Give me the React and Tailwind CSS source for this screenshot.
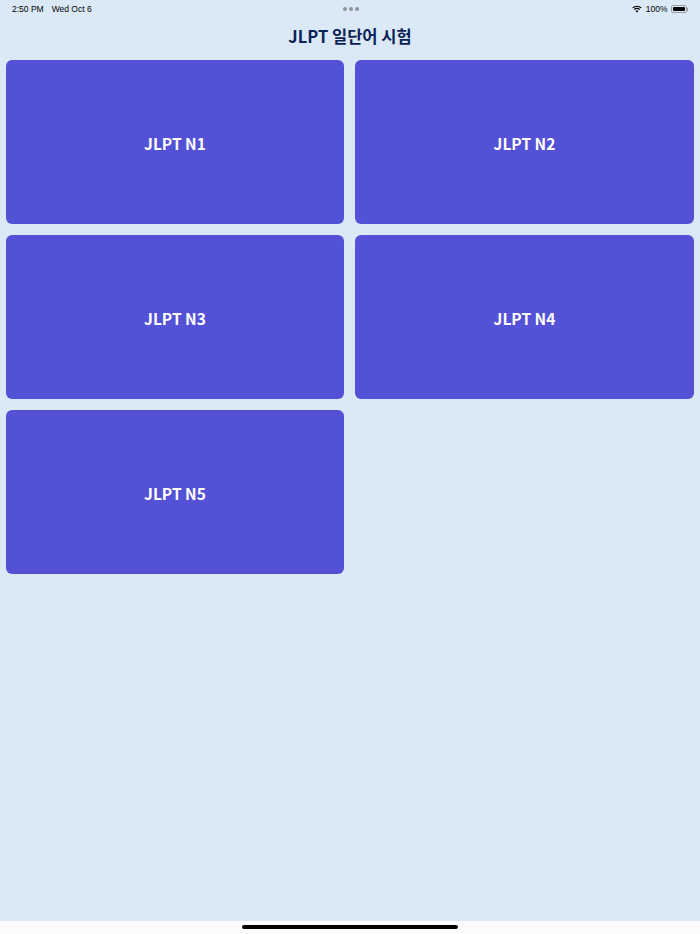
const levels = ["JLPT N1", "JLPT N2", "JLPT N3", "JLPT N4", "JLPT N5"];

function StatusBar() {
  return (
    <div className="h-[18px] shrink-0 flex items-center justify-between pl-[12px] pr-[12px] text-[8.5px] leading-none text-black font-['Liberation_Sans',sans-serif]">
      <div className="flex gap-[8px]">
        <span>2:50 PM</span>
        <span>Wed Oct 6</span>
      </div>
      <div className="flex items-center gap-[3px]">
        <svg className="mr-[1px]" width="10" height="8" viewBox="0 0 22 16" fill="none" stroke="#000" strokeWidth="2.6">
          <path d="M1.5 5.5C7 .8 15 .8 20.5 5.5" />
          <path d="M5 9.2c3.4-2.8 8.6-2.8 12 0" />
          <path d="M11 15.5 7.8 12.3c1.9-1.3 4.5-1.3 6.4 0Z" fill="#000" stroke="none" />
        </svg>
        <span>100%</span>
        <div className="flex items-center">
          <div className="w-[16px] h-[8px] rounded-[2px] border border-[#9a9fa5] p-[1px]">
            <div className="w-full h-full bg-black rounded-[1px]"></div>
          </div>
          <div className="w-[1px] h-[3px] bg-[#9a9fa5] ml-[0.5px]"></div>
        </div>
      </div>
    </div>
  );
}

export default function App() {
  return (
    <div className="relative w-[700px] h-[934px] flex flex-col bg-[#dbe9f6] font-['Noto_Sans_CJK_KR','Noto_Sans',sans-serif]">
      <StatusBar />
      <div className="absolute top-[7px] left-[343px] flex gap-[2px]">
        <div className="w-[4px] h-[4px] rounded-full bg-[#8d949b]"></div>
        <div className="w-[4px] h-[4px] rounded-full bg-[#8d949b]"></div>
        <div className="w-[4px] h-[4px] rounded-full bg-[#8d949b]"></div>
      </div>
      <div className="h-[42px] shrink-0 pb-[6px] flex items-center justify-center text-[16.5px] font-bold text-[#0b2257]">
        JLPT 일단어 시험
      </div>
      <div className="flex-1 px-[6px] grid grid-cols-[338px_339px] gap-[11px] auto-rows-[164px] content-start">
        {levels.map((level) => (
          <div
            key={level}
            className="rounded-[6px] bg-[#5351d5] flex items-center justify-center pt-[3px] text-white text-[15.5px] font-bold"
          >
            {level}
          </div>
        ))}
      </div>
      <div className="h-[13px] shrink-0 bg-[#fbfbfb] flex justify-center">
        <div className="mt-[4px] w-[216px] h-[4px] rounded-full bg-black"></div>
      </div>
    </div>
  );
}
